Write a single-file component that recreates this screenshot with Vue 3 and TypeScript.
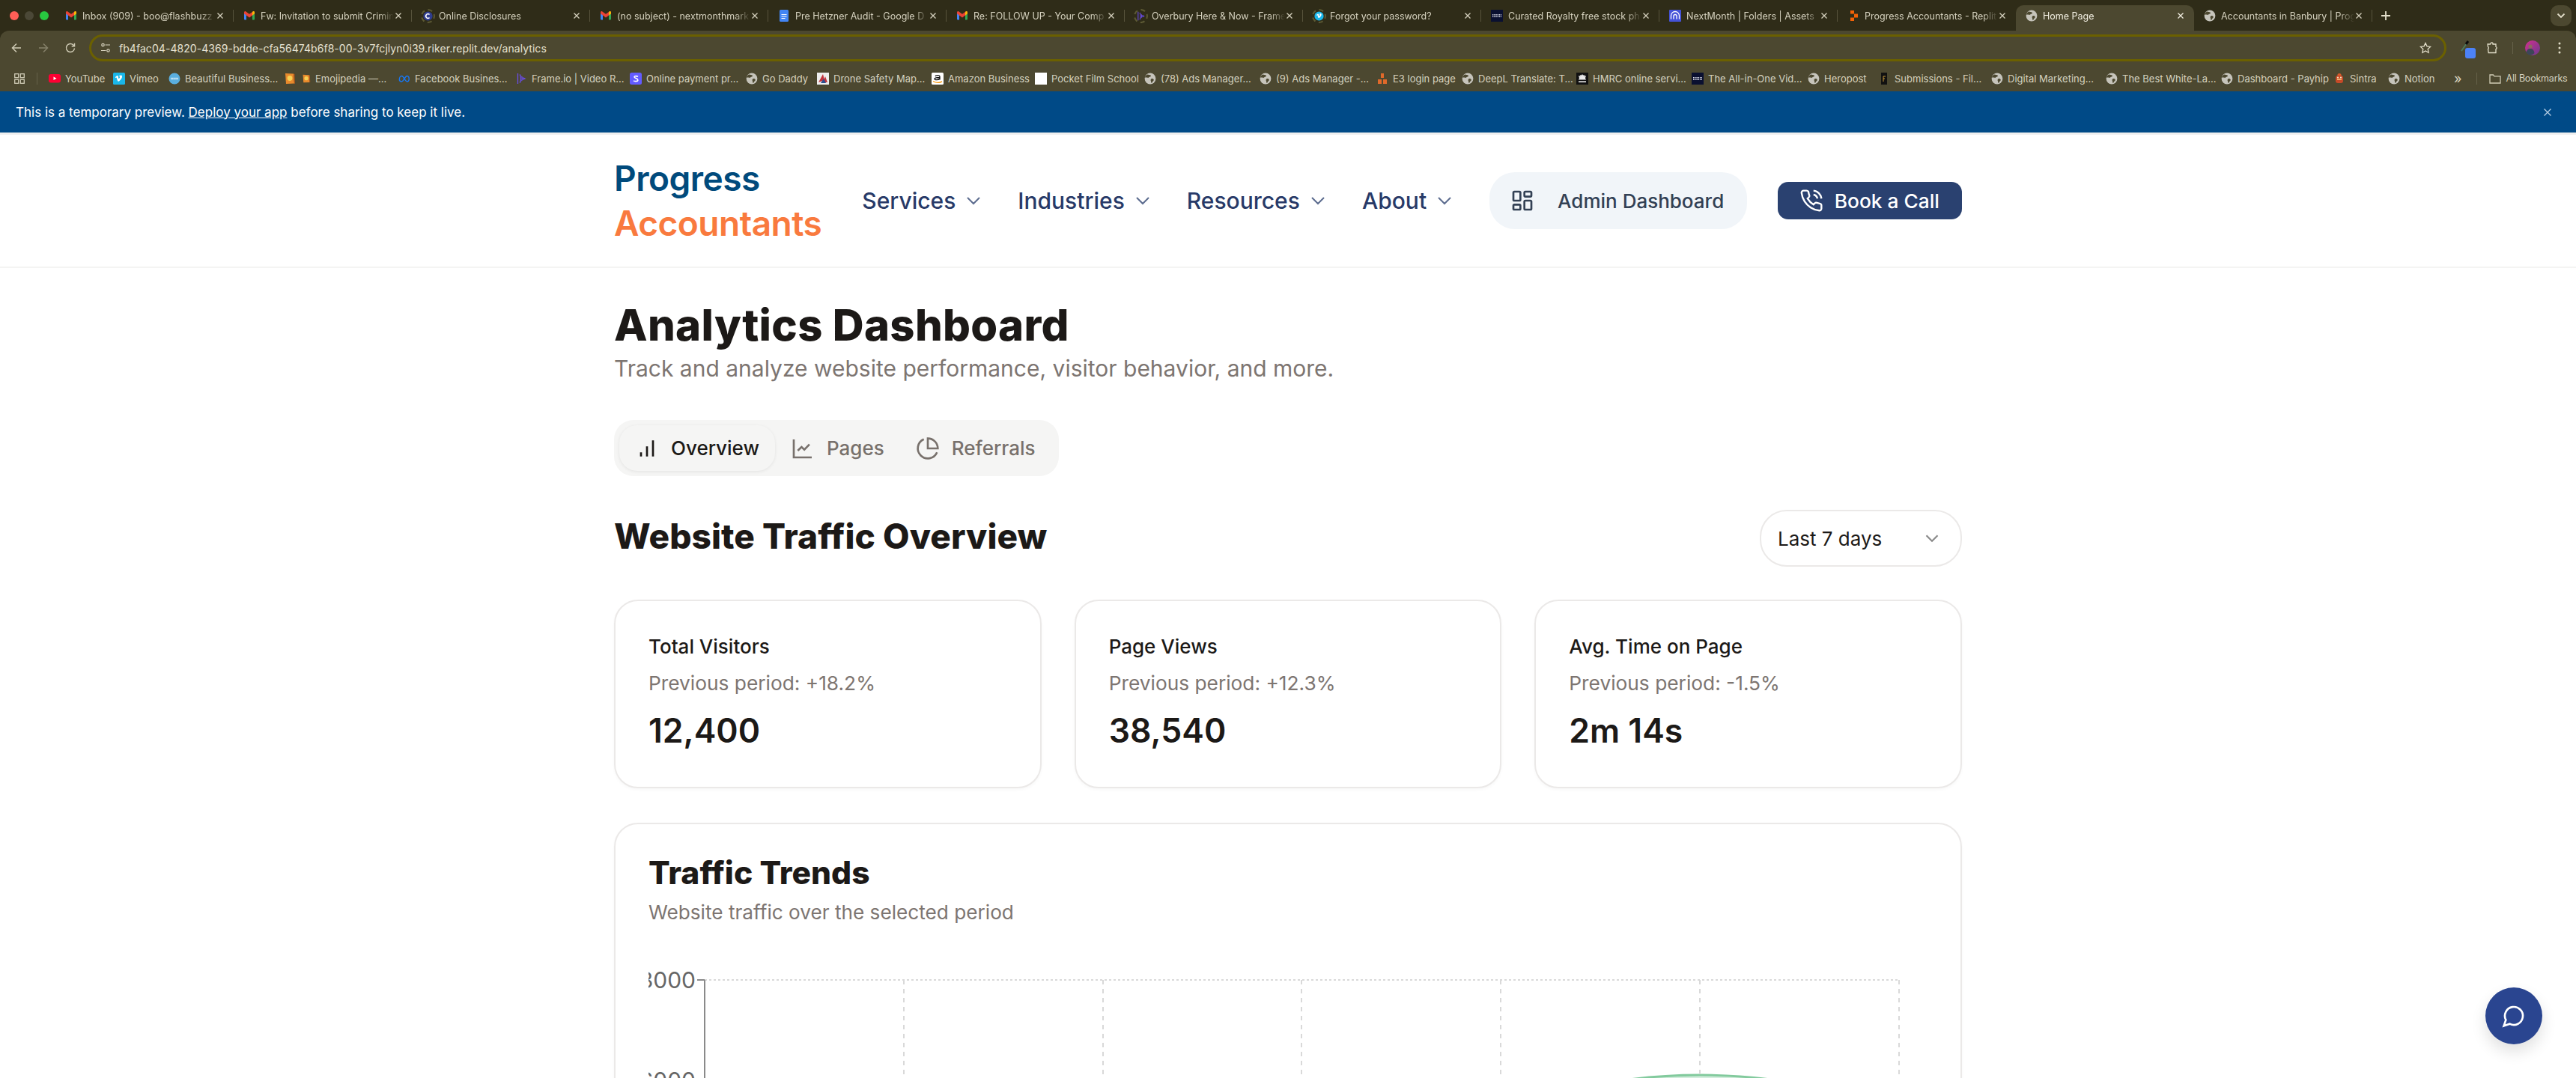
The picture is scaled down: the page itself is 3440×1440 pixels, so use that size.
<script setup lang="ts">
const tabs = [
  { title: 'Inbox (909) - boo@flashbuzz', icon: 'gmail' },
  { title: 'Fw: Invitation to submit Crimin', icon: 'gmail' },
  { title: 'Online Disclosures', icon: 'disclosure', ring: true },
  { title: '(no subject) - nextmonthmark', icon: 'gmail' },
  { title: 'Pre Hetzner Audit - Google D', icon: 'doc' },
  { title: 'Re: FOLLOW UP - Your Comp', icon: 'gmail' },
  { title: 'Overbury Here & Now - Frame', icon: 'frame', ring: true },
  { title: 'Forgot your password?', icon: 'vimeo-round', ring: true },
  { title: 'Curated Royalty free stock ph', icon: 'dark' },
  { title: 'NextMonth | Folders | Assets', icon: 'nextmonth' },
  { title: 'Progress Accountants - Replit', icon: 'replit' },
  { title: 'Home Page', icon: 'globe', active: true },
  { title: 'Accountants in Banbury | Prog', icon: 'globe' },
]

const bookmarks = [
  { label: 'YouTube', icon: 'youtube', w: 86 },
  { label: 'Vimeo', icon: 'vimeo', w: 74 },
  { label: 'Beautiful Business...', icon: 'beautiful', w: 154 },
  { label: 'Emojipedia —...', icon: 'emoji', w: 153, double: true },
  { label: 'Facebook Busines...', icon: 'meta', w: 156 },
  { label: 'Frame.io | Video R...', icon: 'frame', w: 153 },
  { label: 'Online payment pr...', icon: 'stripe', w: 155 },
  { label: 'Go Daddy', icon: 'globe', w: 95 },
  { label: 'Drone Safety Map...', icon: 'drone', w: 153 },
  { label: 'Amazon Business', icon: 'amazon', w: 138 },
  { label: 'Pocket Film School', icon: 'blank', w: 146 },
  { label: '(78) Ads Manager...', icon: 'globe', w: 154 },
  { label: '(9) Ads Manager -...', icon: 'globe', w: 156 },
  { label: 'E3 login page', icon: 'e3', w: 114 },
  { label: 'DeepL Translate: T...', icon: 'globe', w: 153 },
  { label: 'HMRC online servi...', icon: 'hmrc', w: 154 },
  { label: 'The All-in-One Vid...', icon: 'dark', w: 155 },
  { label: 'Heropost', icon: 'globe', w: 94 },
  { label: 'Submissions - Fil...', icon: 'filmfree', w: 151 },
  { label: 'Digital Marketing...', icon: 'globe', w: 153 },
  { label: 'The Best White-La...', icon: 'globe', w: 154 },
  { label: 'Dashboard - Payhip', icon: 'globe', w: 150 },
  { label: 'Sintra', icon: 'sintra', w: 73 },
  { label: 'Notion', icon: 'globe', w: 88 },
]

const navLinks = ['Services', 'Industries', 'Resources', 'About']

const stats = [
  { title: 'Total Visitors', change: 'Previous period: +18.2%', value: '12,400' },
  { title: 'Page Views', change: 'Previous period: +12.3%', value: '38,540' },
  { title: 'Avg. Time on Page', change: 'Previous period: -1.5%', value: '2m 14s' },
]

const gridX = [75, 341, 607, 872, 1138, 1404, 1670]
const gridY = [29, 163]
const yLabels = [
  { y: 29, text: '8000' },
  { y: 163, text: '6000' },
]
</script>

<template>
  <div class="page">
    <svg class="defs" width="0" height="0" aria-hidden="true">
      <defs>
        <symbol id="gmail" viewBox="0 0 16 16">
          <path d="M1 13.5V4l3 2.3v7.2H2a1 1 0 0 1-1-1z" fill="#4285f4" />
          <path d="M12 13.5V6.3L15 4v8.500a1 1 0 0 1-1 1z" fill="#34a853" />
          <path d="M1 5.200V3.600c0-1.200 1.400-1.900 2.400-1.200L8 5.800l4.600-3.400c1-.7 2.400 0 2.400 1.200v1.600l-3 2.200-4 3-4-3z" fill="#ea4335" />
          <path d="M12 3.300l.6-.9c1-.7 2.400 0 2.400 1.200v1.600l-3 2.200z" fill="#fbbc04" />
        </symbol>
        <symbol id="globe" viewBox="0 0 16 16">
          <circle cx="8" cy="8" r="7.400" fill="#c6c4bb" />
          <path d="M4.200 2.400c1.600.5 3.600.3 4.600 1.400.7.8-.5 1.600-1.600 2-1 .4-1.400 1.400-2.600 1-1-.3-2.400-.4-3.800-.3.4-1.700 1.800-3.300 3.400-4.100zM9.500 8.200c1.200-.4 2.600.1 3.200 1 .5.8-.4 1.700-1.100 2.400-.6.7-.9 2-1.900 2.300-.7-.9-.4-2-.9-2.900-.4-.9-.2-2.400.7-2.800z" fill="#4c4830" />
        </symbol>
        <symbol id="doc" viewBox="0 0 16 16">
          <rect x="2" y="0" width="12" height="16" rx="1.500" fill="#4285f4" />
          <path d="M4.500 6.500h7M4.500 9h7M4.500 11.500h5" stroke="#fff" stroke-width="1.200" />
        </symbol>
        <symbol id="replit" viewBox="0 0 16 16">
          <path d="M4 1h5v4.400H4zM9 5.400h5v5H9zM4 10.400h5V15H4z" fill="#f26207" />
        </symbol>
        <symbol id="frame" viewBox="0 0 16 16">
          <path d="M3.500 1v14M6 2.500c2 1.500 2 9.500 0 11M8.500 5c1 1 1 5 0 6M11 7l2 1-2 1z" stroke="#6a4de8" stroke-width="1.300" fill="none" />
        </symbol>
        <symbol id="disclosure" viewBox="0 0 16 16">
          <circle cx="8" cy="8" r="7.500" fill="#2f3d8f" />
          <path d="M10.500 5.500A3.500 3.500 0 1 0 10.500 10.500" stroke="#fff" stroke-width="2" fill="none" />
        </symbol>
        <symbol id="vimeo-round" viewBox="0 0 16 16">
          <circle cx="8" cy="8" r="7.500" fill="#1ab7ea" />
          <path d="M3.500 6.300c1.400-1.200 2.400-2 3-1.900 1.400.2.700 3.600 1.500 3.600.7 0 1.400-1.500 1.400-2.200-.2-1-1-.6-1.400-.4.5-1.800 4.400-2.800 3.900.4-.3 2.200-3.300 5.400-4.400 5.400-1.300 0-1.500-4-2.400-4.700l-.9.500z" fill="#fff" />
        </symbol>
        <symbol id="vimeo" viewBox="0 0 16 16">
          <rect width="16" height="16" rx="1.500" fill="#1ab7ea" />
          <path d="M2.800 6.200C4.300 4.800 5.300 4 6 4.100c1.500.2.700 4 1.600 4 .8 0 1.600-1.700 1.500-2.400-.2-1.100-1.100-.7-1.500-.4.5-2 4.900-3.100 4.400.4-.3 2.500-3.700 6.100-5 6.100-1.400 0-1.600-4.500-2.600-5.300l-1 .6z" fill="#fff" />
        </symbol>
        <symbol id="dark" viewBox="0 0 16 16">
          <rect width="16" height="16" fill="#0a1030" />
          <path d="M2 6.500h12M2 8h12M2 9.500h12" stroke="#d8dae6" stroke-width="1" stroke-dasharray="1.400 .8" />
        </symbol>
        <symbol id="nextmonth" viewBox="0 0 16 16">
          <rect width="16" height="16" rx="1" fill="#4553d8" />
          <path d="M2.500 12.500V8a5.500 5.500 0 0 1 11 0v4.500M6 12.500V8.500a2 2 0 0 1 4 0v4" stroke="#fff" stroke-width="1.300" fill="none" />
        </symbol>
        <symbol id="youtube" viewBox="0 0 16 12">
          <rect width="16" height="11.500" rx="3" fill="#ff0033" />
          <path d="M6.500 3.500l4 2.300-4 2.300z" fill="#fff" />
        </symbol>
        <symbol id="beautiful" viewBox="0 0 16 16">
          <circle cx="8" cy="8" r="7.500" fill="#5aaede" />
          <path d="M3 8h10" stroke="#cfe8f7" stroke-width="2.600" stroke-dasharray="1.500 .6" />
        </symbol>
        <symbol id="emoji" viewBox="0 0 16 16">
          <path d="M2 1l11 .5 1 13-11 .5z" fill="#e88a2c" />
          <path d="M13 1.500l1.500.5.500 12.500-1 .5z" fill="#a9541a" />
          <circle cx="8" cy="7.500" r="3.400" fill="#f7d154" />
        </symbol>
        <symbol id="meta" viewBox="0 0 18 12">
          <path d="M1.500 7.500C1.500 4.500 3 2 5 2c3 0 5 8.500 8 8.500 4 0 4-8.500 0-8.500-3 0-5 8.500-8 8.500-2.200 0-3.500-1-3.500-3z" stroke="#1877f2" stroke-width="1.600" fill="none" />
        </symbol>
        <symbol id="stripe" viewBox="0 0 16 16">
          <rect width="16" height="16" rx="2.500" fill="#635bff" />
          <path d="M11 5.300C10 4.600 6 4 6 5.800c0 2 4.800 1.400 4.800 4.100 0 2.100-4 2-5.800 1" stroke="#fff" stroke-width="1.600" fill="none" />
        </symbol>
        <symbol id="drone" viewBox="0 0 16 16">
          <rect width="16" height="16" fill="#eee" />
          <path d="M2 13L8 2l2 8zM8 13l3-8 3 8z" fill="#c2323c" />
          <path d="M5 14l4-6 3 6z" fill="#2c4f8f" />
        </symbol>
        <symbol id="amazon" viewBox="0 0 16 16">
          <rect width="16" height="16" rx="1.500" fill="#fff" />
          <path d="M5 5c.5-2 6-2 6 .5v4M11 6.500c-6 0-7 .7-7 2 0 1.500 5 1.800 7-.5" stroke="#111" stroke-width="1.300" fill="none" />
          <path d="M2 11.500c4 2.200 9 2.200 12 .4" stroke="#f79400" stroke-width="1.300" fill="none" />
        </symbol>
        <symbol id="blank" viewBox="0 0 16 16">
          <rect width="16" height="16" fill="#fff" />
        </symbol>
        <symbol id="e3" viewBox="0 0 16 16">
          <path d="M6 1h4v6H6zM2 9h5v6H2zM9 9h5v6H9z" fill="#e0692a" />
        </symbol>
        <symbol id="hmrc" viewBox="0 0 16 16">
          <rect width="16" height="16" fill="#111" />
          <path d="M8 2l1 1.500 2-.4-.5 1.500 2.500-.4-1 3 1 2.200H3l1-2.200-1-3 2.500.4L5 3.100 7 3.500z" fill="#e8e8e8" />
          <path d="M3 11.500h10V13H3z" fill="#fff" />
        </symbol>
        <symbol id="filmfree" viewBox="0 0 16 16">
          <rect x="4" width="8" height="16" fill="#111" />
          <path d="M7 5h3M7 5v7M7 8h2" stroke="#c99a3a" stroke-width="1" />
        </symbol>
        <symbol id="sintra" viewBox="0 0 16 16">
          <circle cx="8" cy="3.500" r="2.600" fill="#d85a2a" />
          <rect x="3" y="4" width="10" height="10" rx="3" fill="#c64a28" />
          <circle cx="6" cy="6.500" r="1.100" fill="#f3e2c0" />
          <circle cx="10" cy="6.500" r="1.100" fill="#f3e2c0" />
          <path d="M5 9h6" stroke="#f3c27a" stroke-width="1.600" />
        </symbol>
      </defs>
    </svg>

    <div class="browser">
      <div class="tabstrip">
        <div class="lights">
          <span class="light red"></span>
          <span class="light idle"></span>
          <span class="light green"></span>
        </div>
        <div class="tabs">
          <div v-for="t in tabs" :key="t.title" class="tab" :class="{ active: t.active }">
            <span class="favicon" :class="{ ring: t.ring }">
              <svg width="16" height="16">
                <use :href="'#' + t.icon" />
              </svg>
            </span>
            <span class="tab-title">{{ t.title }}</span>
            <svg class="tab-close" width="10" height="10" viewBox="0 0 10 10">
              <path d="M1.500 1.500l7 7M8.500 1.500l-7 7" stroke="currentColor" stroke-width="1.300" />
            </svg>
          </div>
        </div>
        <svg class="plus" width="14" height="14" viewBox="0 0 14 14">
          <path d="M7 1v12M1 7h12" stroke="#e3dfca" stroke-width="1.800" />
        </svg>
        <div class="tab-menu">
          <svg width="12" height="8" viewBox="0 0 12 8">
            <path d="M1.500 1.500L6 6l4.500-4.500" stroke="#e3dfca" stroke-width="1.800" fill="none" />
          </svg>
        </div>
      </div>

      <div class="toolbar">
        <svg class="tool" width="16" height="16" viewBox="0 0 16 16">
          <path d="M14 8H3M8 2.500L2.500 8 8 13.500" stroke="#cfcbb5" stroke-width="1.500" fill="none" />
        </svg>
        <svg class="tool" width="16" height="16" viewBox="0 0 16 16">
          <path d="M2 8h11M8 2.500L13.500 8 8 13.500" stroke="#85816a" stroke-width="1.500" fill="none" />
        </svg>
        <svg class="tool" width="16" height="16" viewBox="0 0 16 16">
          <path d="M13.500 8.500A5.500 5.500 0 1 1 11.800 4L13.500 5.600M13.500 1.800v3.900H9.700" stroke="#cfcbb5" stroke-width="1.500" fill="none" />
        </svg>
        <div class="omnibox">
          <svg width="14" height="14" viewBox="0 0 14 14" fill="none" stroke="#d8d4c0" stroke-width="1.200">
            <circle cx="3.500" cy="3" r="1.700" />
            <path d="M6.500 3H13M1 10.500h6.500" />
            <circle cx="10.500" cy="10.500" r="1.700" />
          </svg>
          <span class="url">fb4fac04-4820-4369-bdde-cfa56474b6f8-00-3v7fcjlyn0i39.riker.replit.dev/analytics</span>
          <svg class="star" width="16" height="16" viewBox="0 0 16 16">
            <path d="M8 1.500l2 4.300 4.700.6-3.500 3.200.9 4.700L8 12l-4.100 2.300.9-4.700L1.300 6.400 6 5.800z" stroke="#e3dfca" stroke-width="1.300" fill="none" />
          </svg>
        </div>
        <div class="ext">
          <svg class="dropper" width="12" height="16" viewBox="0 0 12 16">
            <path d="M1 15L8 5" stroke="#4d7a5c" stroke-width="2" />
            <path d="M7 6l3-4" stroke="#0c0c0c" stroke-width="3" />
          </svg>
          <span class="ext-badge"></span>
        </div>
        <svg class="puzzle" width="16" height="16" viewBox="0 0 16 16">
          <path d="M1 3h3.500a2 2 0 0 1 3.500-1.300V3h4v3.500a1.700 1.700 0 0 1 0 3.200V14.500H2.200L1.500 9.500a1.800 1.800 0 0 0 0-3z" stroke="#e3dfca" stroke-width="1.300" fill="none" />
        </svg>
        <span class="tool-sep"></span>
        <svg class="avatar" width="20" height="20" viewBox="0 0 20 20">
          <defs>
            <linearGradient id="avatar-bg" x1="0" y1="0" x2="1" y2="1">
              <stop offset="0" stop-color="#d12f8e" />
              <stop offset="1" stop-color="#6d3a8d" />
            </linearGradient>
          </defs>
          <circle cx="10" cy="10" r="10" fill="url(#avatar-bg)" />
          <circle cx="7" cy="8" r="2.600" fill="#8b6a5c" />
          <path d="M1.500 16c1-4 3-5 5.500-5s5 1.500 5.500 6c-3 3.500-8 3.500-11-1z" fill="#3c4658" />
        </svg>
        <svg class="kebab" width="4" height="16" viewBox="0 0 4 16" fill="#e3dfca">
          <circle cx="2" cy="2" r="1.500" />
          <circle cx="2" cy="8" r="1.500" />
          <circle cx="2" cy="14" r="1.500" />
        </svg>
      </div>

      <div class="bookmarks">
        <svg class="apps" width="14" height="14" viewBox="0 0 14 14" fill="none" stroke="#cfcbb5" stroke-width="1.300">
          <rect x="0.700" y="0.700" width="5" height="5" />
          <rect x="8.300" y="0.700" width="5" height="5" />
          <rect x="0.700" y="8.300" width="5" height="5" />
          <rect x="8.300" y="8.300" width="5" height="5" />
        </svg>
        <span class="bm-sep"></span>
        <div v-for="b in bookmarks" :key="b.label" class="bookmark" :style="{ width: b.w + 'px' }">
          <svg v-if="b.double" class="bm-extra" width="16" height="16"><use :href="'#' + b.icon" /></svg>
          <svg class="bm-icon" :width="b.double ? 12 : 16" height="16"><use :href="'#' + b.icon" /></svg>
          <span>{{ b.label }}</span>
        </div>
        <span class="bm-more">»</span>
        <span class="bm-sep last"></span>
        <svg class="folder" width="16" height="14" viewBox="0 0 16 14">
          <path d="M1 2h4.500l1.500 1.800h8V13H1z" stroke="#cfcbb5" stroke-width="1.300" fill="none" />
        </svg>
        <span class="bm-all">All Bookmarks</span>
      </div>
    </div>

    <div class="preview-banner">
      <p>This is a temporary preview. <a>Deploy your app</a> before sharing to keep it live.</p>
      <svg width="12" height="12" viewBox="0 0 12 12">
        <path d="M1.500 1.500l9 9M10.500 1.500l-9 9" stroke="#b7cfe4" stroke-width="1.300" />
      </svg>
    </div>

    <header class="site-header">
      <div class="container header-row">
        <div class="logo">
          <span class="logo-top">Progress</span>
          <span class="logo-bottom">Accountants</span>
        </div>
        <nav class="nav">
          <a v-for="link in navLinks" :key="link" class="nav-link">
            {{ link }}
            <svg width="24" height="24" viewBox="0 0 24 24" fill="none" stroke="#5c6c8f" stroke-width="2">
              <path d="M4 8l8 8 8-8" />
            </svg>
          </a>
        </nav>
        <a class="admin-btn">
          <svg width="32" height="32" viewBox="0 0 24 24" fill="none" stroke="#334155" stroke-width="2">
            <rect x="3" y="3" width="7" height="9" rx="1" />
            <rect x="14" y="3" width="7" height="5" rx="1" />
            <rect x="14" y="12" width="7" height="9" rx="1" />
            <rect x="3" y="16" width="7" height="5" rx="1" />
          </svg>
          Admin Dashboard
        </a>
        <a class="book-btn">
          <svg width="32" height="32" viewBox="0 0 24 24" fill="none" stroke="#fff" stroke-width="1.800">
            <path d="M22 16.920v3a2 2 0 0 1-2.180 2 19.790 19.790 0 0 1-8.630-3.070 19.500 19.500 0 0 1-6-6 19.790 19.790 0 0 1-3.070-8.670A2 2 0 0 1 4.110 2h3a2 2 0 0 1 2 1.720 12.840 12.840 0 0 0 .7 2.810 2 2 0 0 1-.45 2.110L8.090 9.910a16 16 0 0 0 6 6l1.270-1.270a2 2 0 0 1 2.110-.45 12.840 12.840 0 0 0 2.810.7A2 2 0 0 1 22 16.920z" />
            <path d="M14.050 2a9 9 0 0 1 8 7.940M14.050 6A5 5 0 0 1 18 10" />
          </svg>
          Book a Call
        </a>
      </div>
    </header>

    <main class="container content">
      <h1 class="page-title">Analytics Dashboard</h1>
      <p class="page-sub">Track and analyze website performance, visitor behavior, and more.</p>

      <div class="view-tabs">
        <div class="view-tab current">
          <svg width="32" height="32" viewBox="0 0 24 24" fill="none" stroke="currentColor" stroke-width="2">
            <path d="M12 20V10M18 20V4M6 20v-4" />
          </svg>
          Overview
        </div>
        <div class="view-tab">
          <svg width="32" height="32" viewBox="0 0 24 24" fill="none" stroke="currentColor" stroke-width="2">
            <path d="M3 3v18h18M18.700 8l-5.100 5.200-2.800-2.700L7 14.300" />
          </svg>
          Pages
        </div>
        <div class="view-tab">
          <svg width="32" height="32" viewBox="0 0 24 24" fill="none" stroke="currentColor" stroke-width="2">
            <path d="M21.210 15.890A10 10 0 1 1 8 2.830M22 12A10 10 0 0 0 12 2v10z" />
          </svg>
          Referrals
        </div>
      </div>

      <div class="section-head">
        <h2 class="section-title">Website Traffic Overview</h2>
        <div class="range-select">
          Last 7 days
          <svg width="20" height="20" viewBox="0 0 24 24" fill="none" stroke="#8a8a8a" stroke-width="2.600">
            <path d="M3 7.500l9 9 9-9" />
          </svg>
        </div>
      </div>

      <div class="stat-grid">
        <div v-for="s in stats" :key="s.title" class="card stat-card">
          <h3>{{ s.title }}</h3>
          <p class="stat-change">{{ s.change }}</p>
          <p class="stat-value">{{ s.value }}</p>
        </div>
      </div>

      <div class="card chart-card">
        <h3>Traffic Trends</h3>
        <p class="chart-sub">Website traffic over the selected period</p>
        <svg class="chart" width="1710" height="400" viewBox="0 0 1710 400">
          <path d="M1168 190C1268 168 1318 156 1404 156C1490 156 1540 168 1640 190V400H1168Z" fill="#82ca9d" fill-opacity="0.35" stroke="none" />
          <path d="M1168 190C1268 168 1318 156 1404 156C1490 156 1540 168 1640 190" fill="none" stroke="#82ca9d" stroke-width="3" />
          <line v-for="y in gridY" :key="y" x1="75" x2="1670" :y1="y" :y2="y" class="grid-h" />
          <line v-for="x in gridX" :key="x" :x1="x" :x2="x" y1="29" y2="400" class="grid-v" />
          <line x1="75" x2="75" y1="29" y2="400" class="axis-line" />
          <g v-for="l in yLabels" :key="l.y">
            <line x1="65" x2="75" :y1="l.y" :y2="l.y" class="axis-line" />
            <text x="63" :y="l.y + 11" text-anchor="end" class="axis-label">{{ l.text }}</text>
          </g>
        </svg>
      </div>
    </main>

    <button class="chat-btn">
      <svg width="32" height="32" viewBox="0 0 24 24" fill="none" stroke="#fff" stroke-width="2">
        <path d="M7.900 20A9 9 0 1 0 4 16.100L2 22Z" />
      </svg>
    </button>
  </div>
</template>

<style scoped>
.page {
  position: relative;
  height: 1440px;
  overflow: hidden;
  background: #fff;
  font-family: Inter, "Liberation Sans", sans-serif;
  color: #1c1917;
}

.defs {
  position: absolute;
}

p,
h1,
h2,
h3 {
  margin: 0;
}

/* browser chrome */
.browser {
  background: #2f2c18;
}

.tabstrip {
  display: flex;
  align-items: center;
  height: 41px;
}

.lights {
  display: flex;
  gap: 8px;
  width: 74px;
  padding-left: 13px;
  box-sizing: border-box;
  flex-shrink: 0;
}

.light {
  width: 12px;
  height: 12px;
  border-radius: 50%;
}

.light.red { background: #ff5f57; }
.light.idle { background: #4b4837; }
.light.green { background: #28c840; }

.tabs {
  display: flex;
  height: 34px;
  margin-top: 7px;
}

.tab {
  position: relative;
  display: flex;
  align-items: center;
  width: 238px;
  height: 34px;
  box-sizing: border-box;
  padding: 0 13px 6px;
  color: #d6d2bf;
  font-size: 12.5px;
}

.tab::after {
  content: "";
  position: absolute;
  right: 0;
  top: 6px;
  width: 1px;
  height: 16px;
  background: #57533c;
}

.tab:nth-last-child(2)::after,
.tab:nth-last-child(3)::after {
  display: none;
}

.tab.active {
  background: #4c4830;
  border-radius: 10px 10px 0 0;
  color: #f2efe2;
}

.favicon {
  position: relative;
  display: flex;
  align-items: center;
  justify-content: center;
  width: 16px;
  height: 16px;
  flex-shrink: 0;
}

.favicon.ring svg {
  width: 13px;
  height: 13px;
}

.favicon.ring::after {
  content: "";
  position: absolute;
  left: -1.5px;
  top: -1.5px;
  width: 15px;
  height: 15px;
  border: 2px dashed #5d5a34;
  border-radius: 50%;
}

.tab-title {
  flex: 1;
  min-width: 0;
  margin-left: 7px;
  margin-right: 1px;
  overflow: hidden;
  white-space: nowrap;
  -webkit-mask-image: linear-gradient(to right, #000 calc(100% - 20px), transparent);
  mask-image: linear-gradient(to right, #000 calc(100% - 20px), transparent);
}

.tab-close {
  flex-shrink: 0;
}

.plus {
  margin-left: 11px;
}

.tab-menu {
  display: flex;
  align-items: center;
  justify-content: center;
  width: 28px;
  height: 28px;
  margin-left: auto;
  margin-right: 6px;
  border-radius: 10px;
  background: #4c4830;
}

.toolbar {
  display: flex;
  align-items: center;
  height: 46px;
  background: #4c4830;
  border-radius: 12px 12px 0 0;
  padding-left: 14px;
}

.tool {
  margin-right: 20px;
  flex-shrink: 0;
}

.omnibox {
  display: flex;
  align-items: center;
  width: 3148px;
  height: 36px;
  margin-left: -3px;
  padding: 0 17px 0 12px;
  box-sizing: border-box;
  border: 3px solid #6b6000;
  border-radius: 18px;
}

.url {
  margin-left: 11px;
  font-size: 14px;
  color: #e6e2d2;
  letter-spacing: 0.05px;
}

.star {
  margin-left: auto;
}

.ext {
  position: relative;
  width: 20px;
  height: 24px;
  margin-left: 19px;
}

.dropper {
  position: absolute;
  left: 0;
  top: 1px;
}

.ext-badge {
  position: absolute;
  left: 6px;
  top: 12px;
  width: 14px;
  height: 14px;
  border-radius: 3px;
  background: #4c82f7;
}

.puzzle {
  margin-left: 15px;
}

.tool-sep {
  width: 1px;
  height: 16px;
  margin-left: 18px;
  background: #66624a;
}

.avatar {
  margin-left: 16px;
}

.kebab {
  margin-left: 24px;
}

.bookmarks {
  display: flex;
  align-items: center;
  height: 35px;
  background: #4c4830;
  padding-left: 19px;
  font-size: 13px;
  color: #d6d2bf;
  white-space: nowrap;
}

.apps {
  flex-shrink: 0;
}

.bm-sep {
  width: 1px;
  height: 16px;
  margin: 0 15px 0 16px;
  background: #66624a;
  flex-shrink: 0;
}

.bookmark {
  display: flex;
  align-items: center;
  gap: 6px;
  flex-shrink: 0;
  overflow: hidden;
}

.bm-icon,
.bm-extra {
  flex-shrink: 0;
}

.bm-extra {
  margin-right: 2px;
}

.bm-more {
  font-size: 18px;
  line-height: 1;
}

.bm-sep.last {
  margin: 0 16px 0 19px;
}

.folder {
  flex-shrink: 0;
}

.bm-all {
  margin-left: 7px;
  font-size: 12.5px;
  letter-spacing: -0.2px;
}

.preview-banner {
  display: flex;
  align-items: center;
  justify-content: space-between;
  height: 55px;
  padding: 0 32px 0 21px;
  background: #004a87;
  color: #fff;
  font-size: 17px;
}

.preview-banner a {
  text-decoration: underline;
}

/* site */
.container {
  width: 1800px;
  margin: 0 auto;
}

.site-header {
  height: 181px;
  box-sizing: border-box;
  border-top: 3px solid #efefef;
  border-bottom: 2px solid #f4f4f3;
}

.header-row {
  display: flex;
  align-items: center;
  height: 176px;
}

.logo {
  display: flex;
  flex-direction: column;
  font-size: 46px;
  line-height: 60px;
  font-weight: 600;
  letter-spacing: -0.5px;
}

.logo-top { color: #004a7c; }
.logo-bottom { color: #f97a3e; }

.nav {
  display: flex;
  gap: 47px;
  margin-left: 54px;
}

.nav-link {
  display: flex;
  align-items: center;
  gap: 12px;
  font-size: 30px;
  font-weight: 500;
  color: #283a68;
  white-space: nowrap;
}

.admin-btn {
  display: flex;
  align-items: center;
  gap: 31px;
  height: 76px;
  margin-left: 48px;
  padding: 0 31px 0 28px;
  border-radius: 34px;
  background: #f1f5f9;
  color: #334155;
  font-size: 26px;
  font-weight: 500;
  white-space: nowrap;
  flex-shrink: 0;
}

.book-btn {
  display: flex;
  align-items: center;
  gap: 15px;
  height: 50px;
  margin-left: auto;
  padding: 0 30px 0 29px;
  border-radius: 14px;
  background: #2a4170;
  color: #fff;
  font-size: 26.3px;
  font-weight: 500;
  white-space: nowrap;
  flex-shrink: 0;
}

.content {
  padding-top: 41px;
}

.page-title {
  font-size: 58px;
  line-height: 71px;
  font-weight: 800;
  color: #1c1917;
  letter-spacing: 0.3px;
}

.page-sub {
  font-size: 30px;
  line-height: 44px;
  color: #7d7571;
}

.view-tabs {
  display: inline-flex;
  margin-top: 47px;
  padding: 7px 10px 7px 7px;
  border-radius: 26px;
  background: #f5f5f4;
  vertical-align: top;
}

.view-tab {
  display: flex;
  align-items: center;
  gap: 16px;
  height: 61px;
  padding: 0 21px;
  font-size: 26px;
  font-weight: 500;
  color: #78716c;
  border-radius: 24px;
}

.view-tab.current {
  color: #1c1917;
  background: #f5f5f4;
  box-shadow: 0 1px 4px rgba(0, 0, 0, 0.08);
}

.section-head {
  display: flex;
  align-items: center;
  justify-content: space-between;
  margin-top: 45px;
}

.section-title {
  padding-bottom: 6px;
  font-size: 46px;
  font-weight: 800;
  color: #1c1917;
  letter-spacing: 0.05px;
}

.range-select {
  display: flex;
  align-items: center;
  justify-content: space-between;
  width: 270px;
  height: 76px;
  box-sizing: border-box;
  padding: 0 28px 0 22px;
  border: 2px solid #ebe9e8;
  border-radius: 36px;
  font-size: 26px;
}

.stat-grid {
  display: grid;
  grid-template-columns: repeat(3, 1fr);
  gap: 44px;
  margin-top: 44px;
}

.card {
  box-sizing: border-box;
  border: 2px solid #ebe9e8;
  border-radius: 32px;
  background: #fff;
  box-shadow: 0 2px 4px rgba(0, 0, 0, 0.03);
}

.stat-card {
  height: 252px;
  padding: 41px 44px 0;
}

.stat-card h3 {
  font-size: 26px;
  line-height: 40px;
  font-weight: 500;
  color: #1c1917;
}

.stat-change {
  margin-top: 9px;
  font-size: 26.3px;
  line-height: 40px;
  color: #7d7571;
}

.stat-value {
  margin-top: 14px;
  font-size: 44.5px;
  line-height: 58px;
  font-weight: 600;
  color: #1c1917;
}

.chart-card {
  margin-top: 46px;
  height: 700px;
  padding: 37px 44px 0;
}

.chart-card h3 {
  font-size: 42.5px;
  line-height: 56px;
  font-weight: 800;
  color: #1c1917;
}

.chart-sub {
  margin-top: 5px;
  font-size: 26.2px;
  line-height: 40px;
  color: #7d7571;
}

.chart {
  display: block;
  margin-top: 41px;
}

.grid-h,
.grid-v {
  stroke: #d9d9d9;
  stroke-width: 2;
}

.grid-h {
  stroke-dasharray: 3 3;
}

.grid-v {
  stroke-dasharray: 6 6;
}

.axis-line {
  stroke: #8a8a8a;
  stroke-width: 2;
}

.axis-label {
  font-size: 30px;
  fill: #666;
}

.chat-btn {
  position: absolute;
  right: 45px;
  bottom: 45px;
  display: flex;
  align-items: center;
  justify-content: center;
  width: 76px;
  height: 76px;
  padding: 0;
  border: 0;
  border-radius: 50%;
  background: #2a4590;
  box-shadow: 0 10px 20px rgba(0, 0, 0, 0.12);
}
</style>
